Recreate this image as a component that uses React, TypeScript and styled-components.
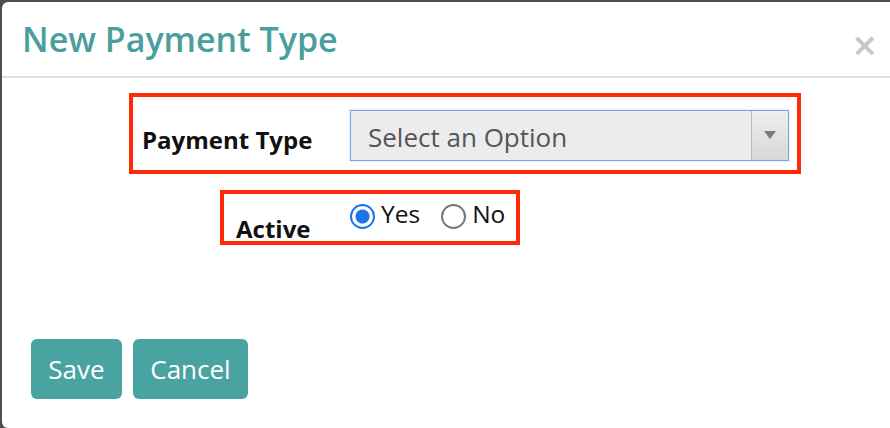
import React from "react";
import styled, { createGlobalStyle } from "styled-components";

const Global = createGlobalStyle`
  html, body { margin: 0; padding: 0; }
  body {
    width: 890px; height: 428px; overflow: hidden;
    background: #4e4e4e;
    font-family: "Open Sans", "Noto Sans", sans-serif;
  }
`;

const Page = styled.div`
  padding: 2px 0 0 2px;
  height: 428px;
  box-sizing: border-box;
`;

const Modal = styled.div`
  width: 900px;
  height: 426px;
  background: #fff;
  border-radius: 6px;
  display: flex;
  flex-direction: column;
  box-sizing: border-box;
`;

const Header = styled.div`
  height: 76px;
  border-bottom: 2px solid #dedede;
  display: flex;
  align-items: center;
  justify-content: space-between;
  padding: 0 12px 0 20px;
  box-sizing: border-box;
  width: 888px;
`;

const Title = styled.h2`
  margin: 0;
  font-size: 34px;
  font-weight: 600;
  color: #4a9e9b;
`;

const Close = styled.button`
  border: none;
  background: none;
  padding: 0;
  font-family: "DejaVu Sans", sans-serif;
  font-size: 32px;
  font-weight: 700;
  color: #c6c6c6;
  line-height: 1;
  position: relative;
  top: 6px;
  cursor: pointer;
`;

const Body = styled.div`
  flex: 1;
  display: flex;
  flex-direction: column;
  padding-top: 15px;
`;

const Highlight = styled.div<{ $left: number; $top: number }>`
  margin-left: ${(p) => p.$left}px;
  margin-top: ${(p) => p.$top}px;
  align-self: flex-start;
  border: 4.5px solid #fe2a08;
  display: flex;
  align-items: flex-start;
`;

const Label = styled.label<{ $width: number; $pad: number; $offset: number }>`
  width: ${(p) => p.$width}px;
  padding-left: ${(p) => p.$pad}px;
  margin-top: ${(p) => p.$offset}px;
  box-sizing: border-box;
  font-size: 24px;
  line-height: 1;
  font-weight: 700;
  color: #111;
  white-space: nowrap;
`;

const Select = styled.div`
  margin: 12.5px 8px 9.5px 0;
  width: 439px;
  height: 51px;
  box-sizing: border-box;
  border: 1.5px solid #78a6ec;
  background: #ececec;
  display: flex;
  align-items: stretch;
  box-shadow: 0 0 2px rgba(120, 166, 236, 0.5);
`;

const SelectText = styled.span`
  flex: 1;
  padding: 3px 0 0 17px;
  display: flex;
  align-items: center;
  font-size: 26px;
  color: #555;
`;

const Arrow = styled.span`
  width: 36px;
  border-left: 1.5px solid #b8b8b8;
  background: linear-gradient(#eeeeee, #d8d8d8);
  display: flex;
  align-items: center;
  justify-content: center;
  &::after {
    content: "";
    border-left: 6px solid transparent;
    border-right: 6px solid transparent;
    border-top: 8px solid #7a7a7a;
  }
`;

const RadioGroup = styled.div`
  display: flex;
  align-items: center;
  gap: 21px;
  margin: 8px 11px 0 0;
`;

const RadioOption = styled.label`
  display: flex;
  align-items: center;
  gap: 6px;
  font-size: 24.5px;
  color: #111;
  line-height: 1;
`;

const RadioCircle = styled.span<{ $checked: boolean }>`
  width: 25px;
  height: 25px;
  box-sizing: border-box;
  border-radius: 50%;
  border: ${(p) => (p.$checked ? "2.5px solid #1a73e8" : "2px solid #777")};
  background: ${(p) =>
    p.$checked ? "radial-gradient(circle, #1a73e8 0 6.5px, #fff 7.5px)" : "#fff"};
  position: relative;
  top: 2px;
`;

const Footer = styled.div`
  margin-top: auto;
  display: flex;
  gap: 11px;
  padding: 0 0 29px 29px;
`;

const Button = styled.button<{ $width: number }>`
  width: ${(p) => p.$width}px;
  height: 60px;
  border: none;
  border-radius: 6px;
  background: #49a3a1;
  color: #fff;
  font-family: "Open Sans", sans-serif;
  font-size: 26px;
  cursor: pointer;
`;

export default function App() {
  return (
    <>
      <Global />
      <Page>
        <Modal>
          <Header>
            <Title>New Payment Type</Title>
            <Close aria-label="Close">×</Close>
          </Header>
          <Body>
            <Highlight $left={127} $top={0}>
              <Label $width={217} $pad={9} $offset={31}>Payment Type</Label>
              <Select>
                <SelectText>Select an Option</SelectText>
                <Arrow />
              </Select>
            </Highlight>
            <Highlight $left={218} $top={16}>
              <Label $width={126} $pad={12} $offset={23}>Active</Label>
              <RadioGroup>
                <RadioOption>
                  <RadioCircle $checked />
                  Yes
                </RadioOption>
                <RadioOption>
                  <RadioCircle $checked={false} />
                  No
                </RadioOption>
              </RadioGroup>
            </Highlight>
          </Body>
          <Footer>
            <Button $width={91}>Save</Button>
            <Button $width={115}>Cancel</Button>
          </Footer>
        </Modal>
      </Page>
    </>
  );
}
